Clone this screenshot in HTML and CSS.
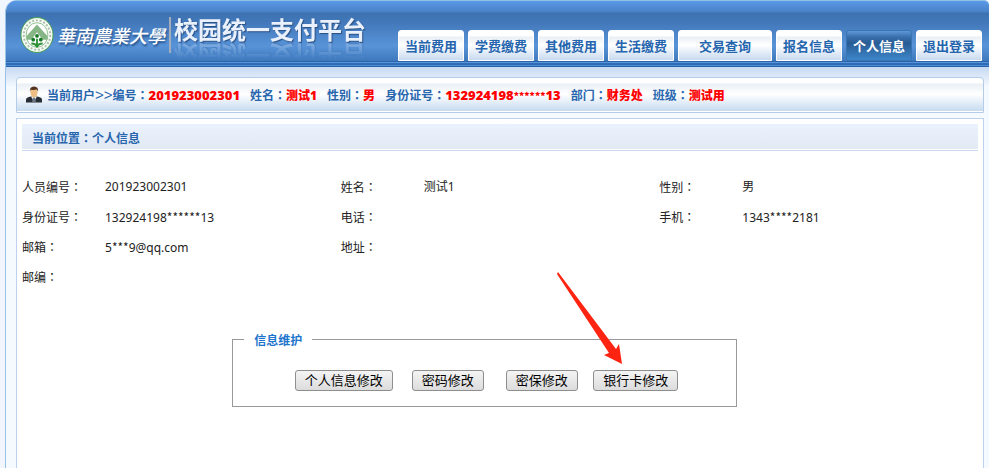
FILE: index.html
```html
<!DOCTYPE html>
<html lang="zh-CN">
<head>
<meta charset="utf-8">
<meta name="viewport" content="width=device-width, initial-scale=1">
<title>校园统一支付平台</title>
<link rel="stylesheet" href="styles.css">
</head>
<body>
<div class="page">
  <header class="header">
    <div class="brand">
      <svg class="emblem" viewBox="0 0 36 38" aria-hidden="true">
        <ellipse cx="18" cy="19" rx="17" ry="18.500" fill="#f6faf4" stroke="#3f9b45"/>
        <ellipse cx="18" cy="19" rx="14" ry="15.500" fill="none" stroke="#a9bfa9" stroke-width="2" stroke-dasharray="2 2"/>
        <ellipse cx="18" cy="19" rx="11.500" ry="13" fill="#fff" stroke="#8cc08e"/>
        <path d="M18 8 29 20v4h-5l-6-8-6 8H7v-4z" fill="#86b586"/>
        <circle cx="18" cy="20" r="2" fill="#167a24"/>
        <circle cx="14" cy="24" r="2" fill="#167a24"/>
        <circle cx="22" cy="24" r="2" fill="#167a24"/>
        <path d="M18 23v9M12 28q5 0 6 4q1-4 6-4" fill="none" stroke="#2f9038" stroke-width="2"/>
      </svg>
      <span class="school">華南農業大學</span>
      <span class="platform">校园统一支付平台</span>
    </div>
    <nav class="nav">
      <a class="tab" href="#">当前费用</a>
      <a class="tab" href="#">学费缴费</a>
      <a class="tab" href="#">其他费用</a>
      <a class="tab" href="#">生活缴费</a>
      <a class="tab tab-wide" href="#">交易查询</a>
      <a class="tab" href="#">报名信息</a>
      <a class="tab tab-active" href="#" aria-current="page">个人信息</a>
      <a class="tab" href="#">退出登录</a>
    </nav>
  </header>
  <main class="main">
    <section class="userbar">
      <svg class="avatar" viewBox="0 0 16 16" aria-hidden="true">
        <path d="M0 16v-3q0-2 5-3h6q5 1 5 3v3z" fill="#272d35"/>
        <path d="M5 10l3 5 3-5z" fill="#f1f4f8"/>
        <path d="M7 11h2l1 4-2 1-2-1z" fill="#6c7785"/>
        <ellipse cx="8" cy="6" rx="3.500" ry="5" fill="#edbd83"/>
        <path d="M4 6Q3 0 8 0t4 6q0-3-2-3-4 1-5 0-1 1-1 3z" fill="#553522"/>
      </svg>
      <span class="item">当前用户<span class="arrows">&gt;&gt;</span>编号<span class="colon">：</span><strong class="value number">201923002301</strong></span>
      <span class="item">姓名<span class="colon">：</span><strong class="value">测试1</strong></span>
      <span class="item">性别<span class="colon">：</span><strong class="value">男</strong></span>
      <span class="item">身份证号<span class="colon">：</span><strong class="value number">132924198<span class="mask">******</span>13</strong></span>
      <span class="item">部门<span class="colon">：</span><strong class="value">财务处</strong></span>
      <span class="item">班级<span class="colon">：</span><strong class="value">测试用</strong></span>
    </section>
    <section class="panel">
      <h1 class="location">当前位置<span class="colon">：</span>个人信息</h1>
      <table class="info">
        <tbody>
          <tr>
            <th scope="row">人员编号<span class="colon">：</span></th><td>201923002301</td>
            <th scope="row">姓名<span class="colon">：</span></th><td>测试1</td>
            <th scope="row">性别<span class="colon">：</span></th><td>男</td>
          </tr>
          <tr>
            <th scope="row">身份证号<span class="colon">：</span></th><td>132924198<span class="mask">******</span>13</td>
            <th scope="row">电话<span class="colon">：</span></th><td></td>
            <th scope="row">手机<span class="colon">：</span></th><td>1343<span class="mask">****</span>2181</td>
          </tr>
          <tr>
            <th scope="row">邮箱<span class="colon">：</span></th><td>5<span class="mask">***</span>9@qq.com</td>
            <th scope="row">地址<span class="colon">：</span></th><td></td>
            <td></td><td></td>
          </tr>
          <tr>
            <th scope="row">邮编<span class="colon">：</span></th><td></td>
            <td></td><td></td>
            <td></td><td></td>
          </tr>
        </tbody>
      </table>
      <fieldset class="maintain">
        <legend>信息维护</legend>
        <div class="actions">
          <div class="action"><button type="button">个人信息修改</button></div>
          <div class="action"><button type="button">密码修改</button></div>
          <div class="action"><button type="button">密保修改</button></div>
          <div class="action">
            <button type="button">银行卡修改</button>
            <svg class="pointer" viewBox="0 0 65 92" aria-hidden="true">
              <path d="M1 0 59 77 62 72 65 92 47 83 52 81 0 2z" fill="#ff2412"/>
            </svg>
          </div>
        </div>
      </fieldset>
    </section>
  </main>
</div>
</body>
</html>
```
FILE: styles.css
```css
* {
  box-sizing: border-box;
}

body {
  margin: 0;
  background: #f1f6fe;
  color: #222;
  font: 12px/18px "Noto Sans", "Noto Sans CJK SC", sans-serif;
}

.page {
  display: flex;
  flex-direction: column;
  min-height: 100vh;
  margin-left: 5px;
  border-left: 1px solid #9bc2e4;
  border-top-left-radius: 12px;
  background: #f5faff;
  overflow: hidden;
}

.header {
  display: flex;
  justify-content: space-between;
  align-items: flex-end;
  height: 67px;
  padding: 0 7px 6px 14px;
  border-top: 1px solid #8fc0e6;
  border-top-right-radius: 5px;
  background:
    linear-gradient(#2b62a8 0 1px, #5796da 1px 2px, #2e6cb8 2px 4px, #4a8bd2 4px 5px, #2b63aa 5px) bottom / 100% 6px no-repeat,
    linear-gradient(#5b9ae7 0, #4981c6 11px, #3d72b0 12px, #4379bb 22px, #5893d8 45px, #3e79bd 60px);
}

.brand {
  display: flex;
  align-items: center;
  height: 52px;
}

.emblem {
  width: 34px;
  height: 38px;
}

.school {
  margin-left: 3px;
  padding-right: 4px;
  border-right: 2px solid #a4adb9;
  color: #fff;
  font: italic 500 18px/36px "Noto Sans CJK TC", sans-serif;
  text-shadow: 1px 2px 2px #234f88;
  white-space: nowrap;
}

.platform {
  height: 30px;
  margin: 0 0 12px 3px;
  color: #eaf1fc;
  font: bold 24px/30px "Noto Sans CJK SC", sans-serif;
  text-shadow: 1px 1px 1px #2a4f80;
  white-space: nowrap;
  -webkit-box-reflect: below -3px linear-gradient(transparent 40%, rgba(255, 255, 255, .3));
}

.nav {
  display: flex;
  gap: 4px;
}

.tab {
  width: 66px;
  height: 31px;
  border: 1px solid #fff;
  border-radius: 3px 3px 0 0;
  background: linear-gradient(#fff 0 5px, #e9eff5 6px, #fff 14px, #c8daef);
  color: #2565ae;
  font-size: 13px;
  font-weight: bold;
  line-height: 31px;
  text-align: center;
  text-decoration: none;
  white-space: nowrap;
}

.tab-wide {
  width: 94px;
}

.tab-active {
  border-color: #3975b5;
  background: linear-gradient(#6098d8, #386fac 6px, #285c94 12px, #3d86ca);
  color: #fff;
}

.main {
  display: flex;
  flex: 1;
  flex-direction: column;
  gap: 5px;
  padding: 10px 5px 0 10px;
  background: linear-gradient(#c6d9f2, #f5faff 20px);
}

.userbar {
  display: flex;
  align-items: center;
  gap: 10px;
  height: 36px;
  padding: 0 9px;
  border: 1px solid #b5cce8;
  border-radius: 4px 4px 0 0;
  background: linear-gradient(#fff 0 5px, #e9f0f6 6px, #fff 16px, #c7dbf0 33px, #fff 33px);
  color: #2866ae;
  font-weight: bold;
  white-space: nowrap;
}

.avatar {
  width: 16px;
  height: 17px;
  margin: 0 -5px 2px 0;
}

.arrows {
  font: 15px/12px "Liberation Sans", sans-serif;
}

/* Keeps the full-width colon centred in its cell */
.colon {
  font-family: "Noto Sans CJK TC", sans-serif;
  font-feature-settings: "locl" 0;
  font-language-override: "ZHT";
}

.value {
  color: #f00;
}

.number {
  font-size: 13px;
}

.mask {
  font-family: "Noto Sans CJK SC", sans-serif;
  font-size: 12px;
}

.number .mask {
  font-size: 10px;
}

.panel {
  flex: 1;
  padding: 5px;
  border: 1px solid #bdd2ee;
  border-bottom: 0;
  background: #fff;
}

.location {
  height: 27px;
  margin: 0;
  padding-left: 10px;
  border-bottom: 1px solid #cbd8f0;
  background: linear-gradient(#eaf2fd, #e2e9f3 25px, #fff 25px);
  color: #2866ae;
  font-size: 12px;
  line-height: 27px;
}

.info {
  width: 100%;
  margin-top: 21px;
  border-collapse: collapse;
  table-layout: fixed;
}

.info th,
.info td {
  height: 30px;
  padding: 0;
  text-align: left;
}

.info th {
  width: 83px;
  font-weight: normal;
}

.maintain {
  width: 505px;
  max-width: 100%;
  margin: 36px 0 0 22%;
  padding: 20px 0 15px;
  border: 1px solid #999;
}

.maintain legend {
  margin-left: 11px;
  padding: 4px 10px 0;
  color: #1c74cc;
  font-weight: bold;
}

.actions {
  display: grid;
  grid-template-columns: 114px repeat(3, 94px);
  justify-content: center;
}

.action {
  position: relative;
  text-align: center;
}

.action button {
  height: 21px;
  padding: 0 9px;
  border: 1px solid #8e8e8e;
  border-radius: 3px;
  background: linear-gradient(#f4f4f4, #dcdcdc);
  color: #000;
  font: 13px/19px "Noto Sans", "Noto Sans CJK SC", sans-serif;
  white-space: nowrap;
}

.pointer {
  position: absolute;
  bottom: 100%;
  left: -32px;
  width: 65px;
  height: 92px;
  margin-bottom: 6px;
  pointer-events: none;
}
```
